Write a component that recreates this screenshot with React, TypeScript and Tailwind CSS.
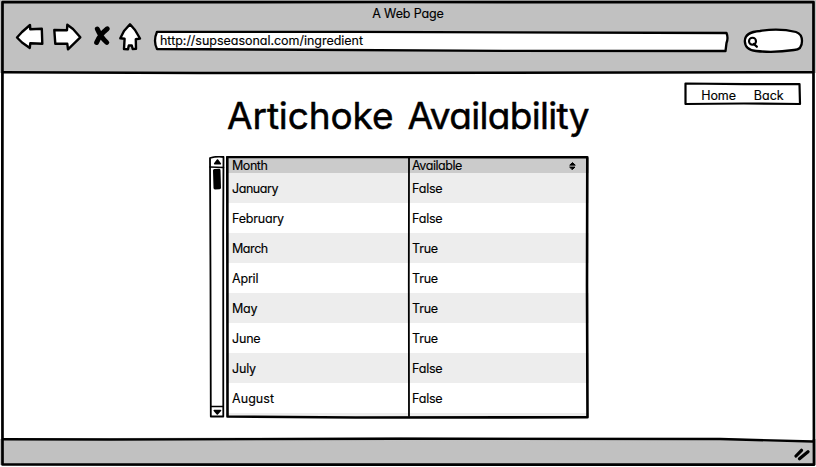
import React from "react";

const rows = [
  ["January", "False"],
  ["February", "False"],
  ["March", "True"],
  ["April", "True"],
  ["May", "True"],
  ["June", "True"],
  ["July", "False"],
  ["August", "False"],
];

const ink = {
  fill: "none",
  stroke: "#000",
  strokeLinejoin: "round" as const,
  strokeLinecap: "round" as const,
};

function Sketch({ w, h, children }: { w: number; h: number; children: React.ReactNode }) {
  return (
    <svg
      className="pointer-events-none absolute top-0 left-0 overflow-visible"
      width={w}
      height={h}
      viewBox={`0 0 ${w} ${h}`}
      {...ink}
    >
      {children}
    </svg>
  );
}

function Navigation() {
  return (
    <svg className="ml-[14px] mt-[21px] shrink-0" width="130" height="32" viewBox="14 21 130 32" {...ink} fill="#fff" strokeWidth="2.4">
      <path d="M17 37.5 L22 32 L30 25 L30.3 29.3 L41.8 28.8 L42.3 43.8 L30.3 43.2 L29.8 48 L22 42.5 Z" />
      <path d="M54.3 30 L67 30.3 L67.3 24.8 L73 29 L80.3 37.3 L68 49.3 L67.3 43.8 L55.3 43.8 Z" />
      <path d="M97.3 29 Q101 37.5 106.8 42.5 M107.3 28.8 Q100 34.5 96.6 42.5" fill="none" strokeWidth="4.9" />
      <path d="M130 24.3 L135 30 L140 38.5 L135.8 39.2 L136 48.8 L132.7 49 L131.8 45.5 L128.8 45.5 L128 49.2 L124 49 L124.6 38.8 L120.3 38.3 L124 31 Z" />
    </svg>
  );
}

function Header() {
  return (
    <header className="relative h-[73px] bg-[#c1c1c1]">
      <div className="flex h-0 justify-center">
        <span className="mt-[6px] h-4 leading-4 tracking-[-0.01em] whitespace-nowrap">A Web Page</span>
      </div>
      <div className="flex items-start">
        <Navigation />
        <div className="relative ml-[9px] mt-[31px] h-[21px] w-[576px]">
          <Sketch w={576} h={21}>
            <path d="M4 .8 L200 .8 L573.5 2 Q575.5 7 573.5 12 L572.5 20 L350 19.8 L4 18 Q0 10 4 .8 Z" fill="#fff" strokeWidth="2.3" />
          </Sketch>
          <span className="relative ml-[7px] block leading-[20px] tracking-[-0.002em]">http://supseasonal.com/ingredient</span>
        </div>
        <svg className="ml-[14px] mt-[28px] shrink-0" width="62" height="26" viewBox="743 28 62 26" {...ink} strokeWidth="2.3">
          <path d="M744.8 41 Q745 32 760 31 Q779 28 796 32 Q802 34 802 41 Q802 50 794 50 Q774 53 756 51 Q745 50 744.8 41 Z" fill="#fff" />
          <circle cx="752.5" cy="41.2" r="3.5" strokeWidth="2.1" />
          <path d="M753.8 44 L756.8 46.7" strokeWidth="2.3" />
        </svg>
      </div>
    </header>
  );
}

function ScrollBar() {
  return (
    <div className="relative h-[263px] w-[17px]">
      <svg width="17" height="263" viewBox="209 156 17 263" {...ink} strokeWidth="1.8">
        <path d="M210 158 Q217 156 223.5 157 L223.2 230 L223.3 416.5 L210.8 416.5 L210.5 280 Z" fill="#fff" />
        <path d="M210 167 L223.5 167.5 M211 406.5 L223 406.5" strokeWidth="1.6" />
        <path d="M214.7 163.8 L217.5 160 L220.3 163.8 Z M214.3 410.5 L220.5 410.5 L217.3 414 Z" fill="#000" strokeWidth="1.6" />
        <path d="M214.5 170.5 L219 170.3 L219.5 187.8 L215 188 Z" fill="#000" strokeWidth="3" />
      </svg>
    </div>
  );
}

function AvailabilityTable() {
  return (
    <div className="relative h-[263px] w-[363px] overflow-hidden pt-[2px] tracking-[-0.016em]">
      <div className="grid h-[15px] grid-cols-[183px_1fr] bg-[#cbcbcb] leading-[15px]">
        <span className="pl-[6px] tracking-[-0.035em]">Month</span>
        <span className="flex items-center justify-between pl-[3px] pr-[13px] tracking-[-0.035em]">
          Available
          <svg width="7" height="8" viewBox="0 0 7 8" {...ink} fill="#000" strokeWidth="1">
            <path d="M1 2.9 L3.5 .6 L6 2.9 Z M1 5.1 L6 5.1 L3.5 7.4 Z" />
          </svg>
        </span>
      </div>
      {rows.map(([month, available], i) => (
        <div
          key={month}
          className={`grid h-[30px] grid-cols-[183px_1fr] pt-px leading-[30px] ${i % 2 ? "bg-white" : "bg-[#ededed]"}`}
        >
          <span className={`pl-[6px] ${month === "August" ? "tracking-[0.005em]" : month === "March" || month === "January" ? "tracking-[-0.035em]" : ""}`}>{month}</span>
          <span className="pl-[3px]">{available}</span>
        </div>
      ))}
      <div className="h-[5px] bg-[#ededed]" />
      <Sketch w={363} h={263}>
        <path d="M1.3 1 L140 1 L361.3 1.3 L361 130 L361.5 261.3 L130 261.5 L1.5 260.5 Z" strokeWidth="2.6" />
        <path d="M183 2 L182.8 130 L183 260" strokeWidth="1.8" />
      </Sketch>
    </div>
  );
}

export default function App() {
  return (
    <div className="relative flex h-[467px] w-[816px] flex-col overflow-hidden bg-white font-['Inter','Open_Sans',sans-serif] text-[12.5px] text-black [font-feature-settings:'cv11'_1,'calt'_0] [-webkit-text-stroke:0.15px_#000]">
      <Header />
      <main className="relative h-[366px]">
        <nav className="relative ml-auto mr-[15px] mt-[9px] flex h-[24px] w-[117px] justify-center gap-[18px] leading-[27px]">
          <Sketch w={117} h={24}>
            <path d="M1.5 1.5 L60 2.2 L115.5 2 L116 22 L60 21.5 L1.5 22 Z" strokeWidth="2.2" />
          </Sketch>
          <span className="relative tracking-[-0.01em]">Home</span>
          <span className="relative">Back</span>
        </nav>
        <h1 className="-mt-[15px] flex h-[50px] justify-center gap-[14px] text-[37px] leading-[50px] whitespace-nowrap [-webkit-text-stroke:0.5px_#000]">
          <span className="tracking-[-0.003em]">Artichoke</span>
          <span className="tracking-[-0.018em]">Availability</span>
        </h1>
        <div className="ml-[209px] mt-[15px] flex">
          <ScrollBar />
          <AvailabilityTable />
        </div>
      </main>
      <footer className="flex h-[26px] justify-end bg-[#c1c1c1]">
        <svg className="mr-[5px] mt-[8px]" width="18" height="14" viewBox="793 447 18 14" {...ink} strokeWidth="3.2">
          <path d="M796 456 L801.5 450.3 M799.5 458.8 L808 451.8" />
        </svg>
      </footer>
      <Sketch w={816} h={467}>
        <path d="M4 438 L110 438 L400 437 L740 438 L812 441 L740 443 L4 440 Z" fill="#c1c1c1" stroke="none" />
        <path d="M724 438 L812 438 L812 442 Z" fill="#fff" stroke="none" />
        <path d="M2.5 2.2 L400 2 L813.5 2.2 L813.5 240 L814 464.7 L400 464.7 L2.5 464.5 L2.3 240 Z" strokeWidth="2.7" />
        <path d="M3 72.3 L200 73 L500 72.7 L813 72.3" strokeWidth="2.5" />
        <path d="M3 439.3 L110 439.5 L400 438.8 L720 439 L813 441.5" strokeWidth="2.4" />
      </Sketch>
    </div>
  );
}
